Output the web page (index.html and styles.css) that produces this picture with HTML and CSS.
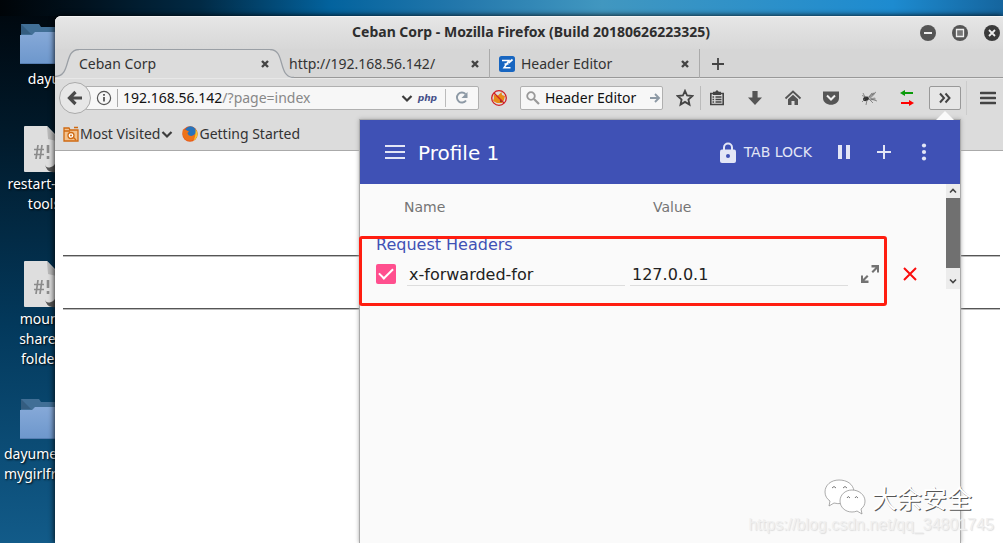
FILE: index.html
```html
<!DOCTYPE html>
<html lang="en">
<head>
<meta charset="utf-8">
<title>Ceban Corp</title>
<link rel="stylesheet" href="styles.css">
</head>
<body class="desktop">
<svg class="defs" width="0" height="0" aria-hidden="true">
  <defs>
    <linearGradient id="fold" x1="0" y1="0" x2="0" y2="1"><stop offset="0" stop-color="#86a9d8"/><stop offset="1" stop-color="#6d97cc"/></linearGradient>
    <symbol id="folder" viewBox="0 0 48 48">
      <path d="M1 4h18l2 3h26v12H1z" fill="#416f96"/><path d="M1 4l10 10H1z" fill="#345d80"/>
      <path d="M0 15h12l3-3h33v32H0z" fill="url(#fold)"/><path d="M0 43h48v1H0z" fill="#567eb2"/>
    </symbol>
    <symbol id="script" viewBox="0 0 48 48">
      <path d="M5 1h22l14 14v32H5q-1 0-1-1V2q0-1 1-1z" fill="#dedede"/><path d="M27 1l1 13 13 3z" fill="#b9b9b9"/>
      <path d="M18 20l-2 14M22 20l-2 14M14 24.500h10M14 29.500h10" stroke="#8b8b8b" stroke-width="1.700" fill="none"/>
      <path d="M28 20v8M28 31v3" stroke="#8b8b8b" stroke-width="2.600"/>
      <path d="M25 39q1 5 6 3 4-1 5-6h5v9q-4 3-9 2-6-1-7-8z" fill="#555"/>
    </symbol>
    <symbol id="close" viewBox="0 0 10 10"><path d="M2 2l6 6M8 2L2 8" stroke="#444" stroke-width="2.400"/></symbol>
    <symbol id="chev" viewBox="0 0 12 12"><path d="M1.500 4L6 8.500 10.500 4" fill="none" stroke="#3c3c3c" stroke-width="2.200"/></symbol>
  </defs>
</svg>

<ul class="launchers">
  <li><svg class="launch-icon"><use href="#folder"/></svg><span>dayu</span></li>
  <li><svg class="launch-icon"><use href="#script"/></svg><span>restart-vm-<br>tools</span></li>
  <li><svg class="launch-icon"><use href="#script"/></svg><span>mount-<br>shared-<br>folders</span></li>
  <li><svg class="launch-icon"><use href="#folder"/></svg><span class="long">dayume<br>mygirlfri</span></li>
</ul>

<main class="window">
  <header class="titlebar">
    <h1>Ceban Corp - Mozilla Firefox (Build 20180626223325)</h1>
    <div class="win-buttons">
      <button aria-label="Minimize"><svg viewBox="0 0 16 16"><circle cx="8" cy="8" r="8" fill="#555"/><path d="M4 8h8" stroke="#eee" stroke-width="2"/></svg></button>
      <button aria-label="Maximize"><svg viewBox="0 0 16 16"><circle cx="8" cy="8" r="8" fill="#555"/><path d="M4.500 4.500h7v7h-7z" fill="#777" stroke="#eee" stroke-width="1.300"/></svg></button>
      <button aria-label="Close"><svg viewBox="0 0 16 16"><circle cx="8" cy="8" r="8" fill="#3b3b3b"/><path d="M5 5l6 6M11 5l-6 6" stroke="#eee" stroke-width="1.800"/></svg></button>
    </div>
  </header>

  <nav class="tabs">
    <svg class="curve" viewBox="0 0 24 29"><path d="M0 29V28C17 28 9 1 24 1v28z" fill="#dcdcdc"/><path d="M0 27.500C17 27.500 8 .5 24 .5" fill="none" stroke="#9a9fa5" stroke-width="1.300"/></svg>
    <div class="tab active"><span>Ceban Corp</span><button aria-label="Close tab"><svg><use href="#close"/></svg></button></div>
    <svg class="curve" viewBox="0 0 24 29"><path d="M0 1C15 1 7 28 24 28v1H0z" fill="#dcdcdc"/><path d="M0 .5C16 .5 7 28.500 24 28.500" fill="none" stroke="#9a9fa5" stroke-width="1.300"/></svg>
    <div class="tab second"><span>http://192.168.56.142/</span><button aria-label="Close tab"><svg><use href="#close"/></svg></button></div>
    <div class="tab third">
      <svg class="favicon" viewBox="0 0 16 16"><rect width="16" height="16" rx="2.500" fill="#1765c0"/><path d="M3 4.500h7L5 11.700h6.500M5.500 8h4" fill="none" stroke="#fff" stroke-width="1.500"/><path d="M9.500 7l4-3.500" stroke="#fff" stroke-width="1.700"/></svg>
      <span>Header Editor</span><button aria-label="Close tab"><svg><use href="#close"/></svg></button>
    </div>
    <button class="new-tab" aria-label="New tab"><svg viewBox="0 0 14 14"><path d="M7 1v12M1 7h12" stroke="#444" stroke-width="1.800"/></svg></button>
  </nav>

  <div class="toolbar">
    <button class="back" aria-label="Back"><svg viewBox="0 0 16 16"><path d="M15 8H3M8.500 2L2.500 8l6 6" fill="none" stroke="#4a4a4a" stroke-width="3.200"/></svg></button>
    <div class="urlbar">
      <svg class="info" viewBox="0 0 16 16"><circle cx="8" cy="8" r="6.600" fill="none" stroke="#555" stroke-width="1.200"/><path d="M8 7v4.500M8 4v1.800" stroke="#555" stroke-width="1.800"/></svg>
      <a class="address" href="#">192.168.56.142<span>/?page=index</span></a>
      <button class="drop" aria-label="Show history"><svg><use href="#chev"/></svg></button>
      <b class="php">php</b>
      <button class="reload" aria-label="Reload"><svg viewBox="0 0 14 14"><path d="M11 9.500A5 5 0 1 1 10.500 3" fill="none" stroke="#8d99a5" stroke-width="1.900"/><path d="M12.500 1v6h-6z" fill="#8d99a5"/></svg></button>
    </div>
    <button class="tool" aria-label="Proxy disabled"><svg viewBox="0 0 18 18"><path d="M3.500 5l3 2 2-1 3-3 .5 3 3 1-1 4-2 3H7l-4-2 1-3z" fill="#e78a18"/><circle cx="11" cy="12" r="1.200" fill="#7c4514"/><circle cx="9" cy="9" r="7.300" fill="none" stroke="#d11f25" stroke-width="1.300"/><path d="M4 4l10 10" stroke="#d11f25" stroke-width="1.300"/></svg></button>
    <label class="search"><svg viewBox="0 0 14 14"><circle cx="5" cy="5" r="3.800" fill="none" stroke="#999" stroke-width="1.800"/><path d="M8 8l5 5" stroke="#999" stroke-width="2.200"/></svg><input aria-label="Search" value="Header Editor"><svg class="go" viewBox="0 0 12 12"><path d="M1 6h8M6 2l4 4-4 4" fill="none" stroke="#8d99a5" stroke-width="1.900"/></svg></label>
    <button class="tool star" aria-label="Bookmark"><svg viewBox="0 0 18 18"><path d="M9 1.800l2.100 4.700 5.200.5-3.900 3.500 1.100 5.100L9 12.900l-4.500 2.700 1.100-5.100L1.700 7l5.200-.5z" fill="none" stroke="#444" stroke-width="1.800"/></svg></button>
    <button class="tool" aria-label="Bookmarks list"><svg viewBox="0 0 18 18"><path d="M2.800 4.500h12.400v11H2.800z" fill="none" stroke="#444" stroke-width="1.600"/><path d="M5 2.800h2.200L9 1l1.800 1.800H13V6H5z" fill="#444"/><path d="M4.500 8h1.600M7.500 8h6M4.500 10.500h1.600M7.500 10.500h6M4.500 13h1.600M7.500 13h6" stroke="#444" stroke-width="1.300"/></svg></button>
    <button class="tool" aria-label="Downloads"><svg viewBox="0 0 18 18"><path d="M6.400 2h5.200v6.500H16l-7 7.500-7-7.500h4.400z" fill="#555"/></svg></button>
    <button class="tool" aria-label="Home"><svg viewBox="0 0 18 18"><path d="M1.500 9.500L9 2.500l7.500 7" fill="none" stroke="#555" stroke-width="1.800"/><path d="M4 10.200l5-4.500 5 4.500V16h-3.500v-4h-3v4H4z" fill="#555"/></svg></button>
    <button class="tool" aria-label="Pocket"><svg viewBox="0 0 18 18"><path d="M1 2.500h16V9c0 9-16 9-16 0z" fill="#555"/><path d="M5 6.500l4 4 4-4" fill="none" stroke="#eee" stroke-width="2"/></svg></button>
    <button class="tool" aria-label="Fly"><svg viewBox="0 0 18 18"><ellipse cx="6" cy="9.800" rx="3" ry="2.200" fill="#333" transform="rotate(-20 6 9.800)"/><path d="M8 8l5-4.500 2.500 1-5 5zM9 9.500l6-1 1 2-5 1z" fill="#999"/><path d="M6 8L2 6.500M5 10l-3 3M7 11l-1 5M9 10l4 4M9 8l3-4M12 6l4-3M11 10l6 2M5 8L3 4" stroke="#666" stroke-width=".7"/></svg></button>
    <button class="tool" aria-label="Header switch"><svg viewBox="0 0 18 18"><path d="M5 4h10" stroke="#0a9b0a" stroke-width="2"/><path d="M2 4l5-3v6z" fill="#0a9b0a"/><path d="M3 14h10" stroke="#f00" stroke-width="2"/><path d="M16 14l-5-3v6z" fill="#f00"/></svg></button>
    <button class="more" aria-label="More tools"><svg viewBox="0 0 12 12"><path d="M1 1.500L5 6l-4 4.500M6.500 1.500l4 4.500-4 4.500" fill="none" stroke="#444" stroke-width="2"/></svg></button>
    <button class="menu" aria-label="Open menu"><svg viewBox="0 0 16 14"><path d="M1 2h14M1 7h14M1 12h14" stroke="#444" stroke-width="2.700" stroke-linecap="round"/></svg></button>
  </div>

  <div class="bookmarks">
    <a href="#"><svg viewBox="0 0 16 16"><path d="M1 2h5l1 2h8v11H1z" fill="#f3c28e" stroke="#cf6a12" stroke-width="1.300"/><circle cx="8" cy="9.500" r="3" fill="#fff" stroke="#cf6a12" stroke-width="1.300"/><circle cx="8" cy="9.500" r="1" fill="#cf6a12"/><path d="M10 11l3 3M1 5h6M11 1.500h4" stroke="#cf6a12" stroke-width="1.400"/></svg><span>Most Visited</span><svg class="small"><use href="#chev"/></svg></a>
    <a href="#"><svg viewBox="0 0 16 16"><circle cx="8" cy="8" r="7.700" fill="#e5571c"/><circle cx="8.500" cy="6" r="5.700" fill="#2673bb"/><path d="M1 3q1 1 3 1l3 1.500-1.500 1.500q.5 3 4 3 3-.5 4-3 1 4-2 6.500-4 2.500-8 0Q-.5 10 1 3z" fill="#ee7218"/><path d="M13.500 3q3 4 1.500 7.500-1 3-4 4.500 3-4 2.500-12z" fill="#f7c42a"/></svg><span>Getting Started</span></a>
  </div>

  <section class="page"><hr><hr></section>

  <section class="popup" aria-label="Header profile">
    <header class="popup-head">
      <button aria-label="Profiles"><svg class="burger" viewBox="0 0 20 14"><path d="M0 1h20M0 7h20M0 13h20" stroke="#e3e6f6" stroke-width="1.800"/></svg></button>
      <h2>Profile 1</h2>
      <button class="lock"><svg viewBox="0 0 16 21"><path d="M4 8V5.500a4 4 0 0 1 8 0V8" fill="none" stroke="#e3e6f6" stroke-width="2"/><rect y="7.500" width="16" height="13.500" rx="2" fill="#e3e6f6"/><circle cx="8" cy="14" r="2" fill="#3f51b5"/></svg>TAB LOCK</button>
      <button class="act" aria-label="Pause"><svg viewBox="0 0 16 16"><path d="M2 1h4v14H2zM10 1h4v14h-4z" fill="#e3e6f6"/></svg></button>
      <button class="act" aria-label="Add"><svg viewBox="0 0 16 16"><path d="M8 1v14M1 8h14" stroke="#e3e6f6" stroke-width="2"/></svg></button>
      <button class="act" aria-label="More"><svg class="dots" viewBox="0 0 16 18"><circle cx="8" cy="2.500" r="2.100" fill="#e3e6f6"/><circle cx="8" cy="9" r="2.100" fill="#e3e6f6"/><circle cx="8" cy="15.500" r="2.100" fill="#e3e6f6"/></svg></button>
    </header>
    <div class="scroller">
      <div class="rules">
        <div class="cols"><span>Name</span><span>Value</span></div>
        <h3>Request Headers</h3>
        <div class="rule">
          <input type="checkbox" aria-label="Enable header" checked>
          <div class="fields">
            <input type="text" aria-label="Name" value="x-forwarded-for">
            <input type="text" aria-label="Value" value="127.0.0.1">
          </div>
          <button aria-label="Expand"><svg viewBox="0 0 18 18"><path d="M10.500 0H18v7.500h-2V4l-4 4-1.500-1.500 4-4h-4zM0 10.500h2V14l4-4 1.500 1.500-4 4H7.500v2.500H0z" fill="#737373"/></svg></button>
          <button class="remove" aria-label="Remove"><svg viewBox="0 0 14 14"><path d="M1 1l12 12M13 1L1 13" stroke="#fb0d0d" stroke-width="2"/></svg></button>
        </div>
      </div>
      <div class="scrollbar"><svg viewBox="0 0 14 14"><path d="M4 8.500l3-3 3 3" fill="none" stroke="#444" stroke-width="1.600"/></svg><i></i><svg viewBox="0 0 14 14"><path d="M4 5.500l3 3 3-3" fill="none" stroke="#444" stroke-width="1.600"/></svg></div>
    </div>
    <div class="highlight"></div>
  </section>
</main>

<div class="watermark">
  <div class="brand"><svg viewBox="0 0 42 36"><g fill="#fff" stroke="#888" stroke-width=".7"><path d="M15 1C7 1 1 6 1 13c0 4 2 7 5 9l-1 5 5-3q8 2 13-2 7-4 7-10C29 5 23 1 15 1z"/><path d="M28 11c-7 0-12 5-12 11s5 11 12 11q3 0 5-1l5 3-1-5c3-2 4-5 4-8 0-6-6-11-13-11z"/></g><path d="M8 9q2-3 4 0M19 9q2-3 4 0M23 19q1-3 3 0M31 19q1-3 3 0" fill="none" stroke="#777"/></svg><span lang="zh">大余安全</span></div>
  <p>https://blog.csdn.net/qq_34801745</p>
</div>
</body>
</html>
```
FILE: styles.css
```css
* { box-sizing: border-box; }
body, h1, h2, h3, p, ul { margin: 0; padding: 0; }
button { display: flex; align-items: center; justify-content: center; border: 0; padding: 0; background: none; font: inherit; color: inherit; flex: none; }
svg { flex: none; display: block; }
a { color: inherit; text-decoration: none; }
input { font: inherit; color: inherit; min-width: 0; }
.defs { position: absolute; }

.desktop {
  position: relative;
  min-height: 100vh;
  overflow: hidden;
  font: 14px/20px "Noto Sans", "Open Sans", sans-serif;
  color: #333;
  background: linear-gradient(180deg, #00060c 0, #011a2b 25%, #03395c 60%, #125b89 100%);
}
.desktop::before { content: ""; position: absolute; top: 0; left: 0; right: 0; height: 16px; background: linear-gradient(90deg, #000408 0, #01111d 8%, #012a45 20%, #03639e 33%, #2478ac 46%, #4197c0 60%, #1d8bd0 89%, #15659e 100%); }

.launchers { display: grid; grid-template-rows: 105px 135px 135px auto; width: 88px; padding-top: 20px; list-style: none; color: #fff; text-align: center; text-shadow: 1px 1px 2px #000; }
.launchers li { display: flex; flex-direction: column; align-items: center; }
.launch-icon { width: 48px; height: 48px; }
.launchers span { padding-top: 1px; }
.launchers .long { align-self: flex-start; padding-left: 4px; text-align: left; }

.window { position: absolute; top: 16px; right: 0; bottom: 0; left: 55px; display: flex; flex-direction: column; background: #fff; border-radius: 6px 0 0 0; box-shadow: 0 0 6px #000; }

.titlebar { display: grid; grid-template-columns: 1fr; align-items: center; height: 33px; background: linear-gradient(#e6e6e6, #d7d7d7); border-top: 1px solid #f5f5f5; border-radius: 6px 0 0 0; }
.titlebar h1 { grid-area: 1 / 1; text-align: center; font-size: 14px; line-height: 20px; color: #2e2e2e; padding: 0 0 2px 4px; }
.win-buttons { grid-area: 1 / 1; justify-self: end; display: flex; gap: 16px; padding-right: 3px; }
.win-buttons svg { width: 16px; height: 16px; }

.tabs { display: flex; height: 29px; background: linear-gradient(#d6d6d6, #d6d6d6) top / 100% 28px no-repeat, #999; }
.curve { width: 24px; height: 29px; }
.tab { display: flex; align-items: center; }
.tab span { flex: 1; white-space: nowrap; }
.tab button svg { width: 10px; height: 10px; }
.active { width: 191px; background: #dcdcdc; border-top: 1px solid #9a9fa5; }
.active + .curve { margin-right: -5px; z-index: 1; }
.second { width: 201px; padding-right: 9px; }
.third { width: 210px; padding: 0 9px; gap: 6px; }
.second, .third { padding-top: 1px; border-right: 1px solid #aaa; }
.favicon { width: 16px; height: 16px; }
.new-tab { width: 36px; }
.new-tab svg { width: 14px; height: 14px; }

.toolbar { display: flex; align-items: center; height: 40px; padding-left: 4px; background: #dcdcdc; box-shadow: inset 0 1px #e8e8e8; }
.back { width: 32px; height: 32px; border: 1px solid #aaa; border-radius: 50%; background: #e7e7e7; z-index: 1; }
.back svg { width: 16px; height: 16px; }
.urlbar { flex: 1; display: flex; align-items: center; height: 24px; margin-left: -6px; margin-right: 5px; padding-left: 10px; border: 1px solid #b0b0b0; border-radius: 2px; background: #f7f7f7; }
.info { width: 16px; height: 16px; }
.address { flex: 1; margin-left: 5px; padding-left: 5px; border-left: 1px solid #aaa; line-height: 18px; color: #111; white-space: nowrap; }
.address span { color: #888; }
.drop svg { width: 12px; height: 12px; }
.php { margin: 0 8px 0 5px; font: italic bold 9px/18px "DejaVu Sans", sans-serif; color: #46508a; }
.reload { width: 33px; height: 18px; border-left: 1px solid #bbb; }
.reload svg { width: 14px; height: 14px; }
.tool { width: 30px; height: 24px; margin-right: 8px; }
.tool svg { width: 18px; height: 18px; }
.urlbar + .tool { margin-right: 6px; }
.search { display: flex; align-items: center; gap: 5px; width: 143px; height: 24px; margin-right: 7px; padding: 0 1px 0 5px; border: 1px solid #b0b0b0; border-radius: 2px; background: #f7f7f7; }
.search svg { width: 14px; height: 14px; }
.search .go { width: 12px; height: 12px; }
.search input { flex: 1; border: 0; padding: 0; background: none; color: #111; }
.star { width: 31px; margin-right: 1px; border-right: 1px solid #bbb; }
.more { width: 32px; height: 24px; border: 1px solid #999; border-radius: 2px; background: #e6e6e6; margin-left: -1px; }
.more svg { width: 12px; height: 12px; }
.menu { width: 37px; height: 34px; margin-left: 5px; padding-left: 6px; border-left: 1px solid #ccc; }
.menu svg { width: 16px; height: 14px; }

.bookmarks { display: flex; gap: 9px; height: 33px; padding: 6px 8px 0; background: #dcdcdc; border-bottom: 1px solid #aaa; }
.bookmarks a { display: flex; align-items: center; height: 20px; gap: 1px; }
.bookmarks svg { width: 16px; height: 16px; }
.bookmarks .small { width: 12px; height: 12px; }

.page { padding: 104px 3px 0 8px; }
.page hr { height: 2px; margin: 0 0 51px; border: 0; border-top: 1px solid #555; border-bottom: 1px solid #bbb; }

.popup { position: absolute; top: 103px; right: 42px; bottom: 0; width: 602px; border: 1px solid #aaa; border-bottom: 0; background: #fafafa; box-shadow: 0 0 4px #aaa; font: 16px/20px "DejaVu Sans", sans-serif; color: #222; }
.popup::before { content: ""; position: absolute; top: -9px; right: 6px; border: 9px solid transparent; border-top: 0; border-bottom-color: #fafafa; }
.popup-head { display: flex; align-items: center; height: 64px; padding: 0 16px 0 25px; background: #3f51b5; color: #e3e6f6; }
.burger { width: 20px; height: 14px; }
.popup-head h2 { flex: 1; margin-left: 13px; padding-top: 2px; font-size: 20px; line-height: 28px; font-weight: 400; color: #fff; }
.lock { gap: 8px; margin-right: 12px; font-size: 14px; }
.lock svg { width: 16px; height: 21px; }
.act { width: 40px; height: 40px; }
.act svg { width: 16px; height: 16px; }
.act .dots { height: 18px; }

.scroller { display: flex; height: 105px; }
.rules { flex: 1; overflow: hidden; }
.cols { display: grid; grid-template-columns: 249px 1fr; padding: 13px 0 0 44px; font-size: 14px; color: #757575; }
.rules h3 { margin: 18px 0 0 16px; font-size: 16px; line-height: 20px; font-weight: 400; color: #3f51b5; }
.rule { display: flex; align-items: center; padding: 6px 0 0 16px; }
.rule [type="checkbox"] { appearance: none; width: 20px; height: 20px; margin: 0; border-radius: 2px; background: #ff4f8e; display: grid; place-items: center; }
.rule [type="checkbox"]::after { content: ""; width: 6px; height: 12px; margin-bottom: 4px; border: solid #fff; border-width: 0 2px 2px 0; transform: rotate(45deg); }
.fields { display: flex; gap: 5px; width: 441px; margin: 0 13px 0 11px; }
.fields input { flex: 1; height: 25px; border: 0; border-bottom: 1px solid #ddd; padding: 2px 2px 0; background: none; }
.rule button svg { width: 18px; height: 18px; }
.rule .remove { margin-left: 24px; }
.rule .remove svg { width: 14px; height: 14px; }
.scrollbar { display: flex; flex-direction: column; width: 14px; background: #ececec; }
.scrollbar svg { width: 14px; height: 14px; }
.scrollbar i { height: 70px; margin-bottom: 6px; background: #707070; }
.highlight { position: absolute; top: 116px; left: -1px; width: 528px; height: 70px; border: 3px solid #ff1d10; border-radius: 3px; }

.watermark { position: absolute; right: 9px; bottom: 8px; display: flex; flex-direction: column; align-items: flex-end; }
.brand { display: flex; align-items: center; gap: 6px; padding-right: 22px; font: 25px/36px "Noto Sans CJK SC", sans-serif; color: #fff; text-shadow: 1px 1px 0 #555; }
.brand svg { width: 42px; height: 36px; }
.watermark p { font: 16px/20px "Liberation Sans", sans-serif; color: #f0f0f0; text-shadow: 1px 1px 1px #ddd; }
```
